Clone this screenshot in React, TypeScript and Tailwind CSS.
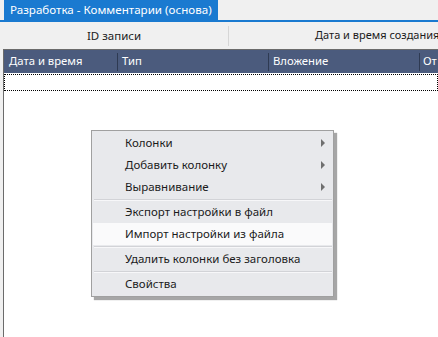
import { ReactNode } from 'react'

const font = { fontFamily: '"Noto Sans", "Open Sans", sans-serif' }

function MenuItem({ children, sub, active }: { children: ReactNode; sub?: boolean; active?: boolean }) {
    return (
        <div
            className={`relative flex h-[22px] items-center pl-[33px] text-[11.5px] text-[#1b1b1b] ${
                active ? 'mx-[1px] bg-[#fafafb]' : ''
            }`}
        >
            <span className={active ? '-ml-[1px]' : ''}>{children}</span>
            {sub && (
                <span className="absolute right-[8px] top-[7px] h-0 w-0 border-y-[4px] border-l-[4px] border-y-transparent border-l-[#6f6f6f]" />
            )}
        </div>
    )
}

function Sep() {
    return (
        <div className="pt-[1px] pl-[2px] pr-[1px]">
            <div className="h-[1px] bg-[#d2d3d7]" />
            <div className="h-[1px] bg-[#f7f7f9]" />
        </div>
    )
}

export default function App() {
    return (
        <div className="relative h-[337px] w-[438px] overflow-hidden bg-[#f0f0f0]" style={font}>
            {/* tab strip */}
            <div className="flex h-[22px] items-end border-b-2 border-[#1a7ad0] pl-[4px]">
                <div className="flex h-[20px] items-center bg-[#1a7ad0] px-[6px] text-[11.6px] text-white whitespace-nowrap">
                    Разработка - Комментарии (основа)
                </div>
            </div>

            {/* group bar */}
            <div className="flex h-[27px] items-center text-[11.5px] text-[#1b1b1b] whitespace-nowrap">
                <div className="flex w-[228px] shrink-0 justify-center">ID записи</div>
                <div className="h-[20px] w-px shrink-0 bg-[#d6d6d6]" />
                <div className="shrink-0 pl-[86px] text-[11px]">Дата и время создания</div>
            </div>

            {/* grid */}
            <div className="ml-[3px] h-[290px] border-l border-t border-[#6b6b6b] bg-white">
                <div className="flex h-[23px] items-center bg-[#4b5b7d] text-[11.3px] text-white whitespace-nowrap">
                    <div className="w-[113px] shrink-0 pl-[5px]">Дата и время</div>
                    <div className="h-[18px] w-px shrink-0 bg-[#2e3a52]" />
                    <div className="w-[150px] shrink-0 pl-[4px]">Тип</div>
                    <div className="h-[18px] w-px shrink-0 bg-[#2e3a52]" />
                    <div className="w-[150px] shrink-0 pl-[4px]">Вложение</div>
                    <div className="h-[18px] w-px shrink-0 bg-[#2e3a52]" />
                    <div className="pl-[3px]">От</div>
                </div>
                <div className="mt-[1px] h-[17px] border border-dotted border-black" />
            </div>

            {/* context menu */}
            <div className="absolute left-[91px] top-[130px] w-[243px] border border-[#a0a0a0] bg-[#e8e9ec] py-[1px] shadow-[3px_3px_1px_rgba(0,0,0,0.35)]">
                <MenuItem sub>Колонки</MenuItem>
                <MenuItem sub>Добавить колонку</MenuItem>
                <MenuItem sub>Выравнивание</MenuItem>
                <Sep />
                <MenuItem>Экспорт настройки в файл</MenuItem>
                <MenuItem active>Импорт настройки из файла</MenuItem>
                <Sep />
                <MenuItem>Удалить колонки без заголовка</MenuItem>
                <Sep />
                <MenuItem>Свойства</MenuItem>
            </div>
        </div>
    )
}
